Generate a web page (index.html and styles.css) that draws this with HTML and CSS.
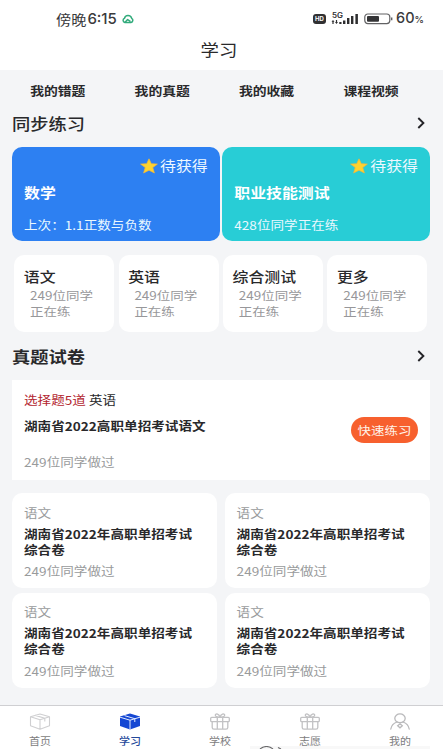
FILE: index.html
```html
<!DOCTYPE html>
<html lang="zh-CN">
<head>
<meta charset="utf-8">
<title>学习</title>
<link rel="stylesheet" href="styles.css">
</head>
<body>
<svg class="defs" width="0" height="0">
  <symbol id="star" viewBox="0 0 18 16"><path d="M9 .8 11.3 5.7 17.4 6.1 12.8 9.6 14.4 15 9 12.2 3.6 15 5.2 9.6.6 6.1 6.7 5.7Z" fill="#fdd32f" stroke="#f3b63a" stroke-width=".7" stroke-linejoin="round"/></symbol>
  <symbol id="chevron" viewBox="0 0 8 12"><path d="M1.3 1 6.4 6 1.3 11" fill="none" stroke="#242428" stroke-width="1.9"/></symbol>
  <symbol id="gift" viewBox="0 0 20 17"><g fill="none" stroke="#c2c2c4" stroke-width="1.3" stroke-linejoin="round"><rect x=".7" y="4.300" width="18.600" height="4.400" rx="1"/><path d="M2.200 8.700V14.600Q2.200 16.200 4 16.200H16Q17.800 16.200 17.800 14.600V8.700M7.300 4.300V16M12.700 4.300V16M10 4.200C7 4.200 5 3.400 5.300 2 5.800.2 9.200.600 10 4.200 10.800.600 14.200.200 14.700 2 15 3.400 13 4.200 10 4.200"/></g></symbol>
</svg>
<div class="app">
  <header class="status">
    <div class="clock"><span class="t">傍晚</span><span class="time">6:15</span>
      <svg width="12" height="10" viewBox="0 0 12 10"><path d="M2.800 8.500H9A2.200 2.200 0 0 0 9.700 4.400C9.300 2.400 7.900 1.400 6 1.400S2.800 2.500 2.500 4.300A2.200 2.200 0 0 0 2.800 8.500L5.600 5.600 8 7.200" fill="none" stroke="#32ab7c" stroke-width="1.500" stroke-linecap="round" stroke-linejoin="round"/></svg>
    </div>
    <div class="signals">
      <span class="hd">HD</span>
      <svg class="bars" width="28" height="13" viewBox="0 0 28 13"><text x="1" y="5.600" class="net" textLength="11" lengthAdjust="spacingAndGlyphs">5G</text><path fill="#2d2d2f" d="M2 8 3.500 9.700H2.600V12H1.400V9.700H.5ZM5.500 12 4 10H4.900V8H6.100V10H7ZM8.300 10h2.200v2h-2.200ZM12 8.500h2.400V12h-2.400ZM16 6h2.400v6h-2.400ZM20 4h2.400v8h-2.400ZM24.400 2h2.500v10h-2.500Z"/></svg>
      <svg class="battery" width="29" height="12" viewBox="0 0 29 12"><rect x=".8" y="1" width="25" height="9.600" rx="3" fill="none" stroke="#626264" stroke-width="1.200"/><rect x="3" y="3" width="12" height="5.700" rx="1" fill="#343436"/><path d="M27.700 4.500v2.800" stroke="#626264" stroke-width="1.400"/></svg>
      <span class="percent">60<small>%</small></span>
    </div>
  </header>
  <h1 class="title"><span class="t">学习</span></h1>

  <main>
    <nav class="links"><span class="t">我的错题</span><span class="t">我的真题</span><span class="t">我的收藏</span><span class="t">课程视频</span></nav>

    <div class="section"><h2 class="t">同步练习</h2><svg width="8" height="12"><use href="#chevron"/></svg></div>
    <div class="heroes">
      <article class="hero blue">
        <div class="badge"><svg width="18" height="16"><use href="#star"/></svg><span class="t">待获得</span></div>
        <h3 class="t">数学</h3>
        <p class="t">上次：1.1正数与负数</p>
      </article>
      <article class="hero teal">
        <div class="badge"><svg width="18" height="16"><use href="#star"/></svg><span class="t">待获得</span></div>
        <h3 class="t">职业技能测试</h3>
        <p class="t">428位同学正在练</p>
      </article>
    </div>
    <div class="subjects">
      <article class="subject"><h3 class="t">语文</h3><p class="t">249位同学</p><p class="t">正在练</p></article>
      <article class="subject"><h3 class="t">英语</h3><p class="t">249位同学</p><p class="t">正在练</p></article>
      <article class="subject"><h3 class="t">综合测试</h3><p class="t">249位同学</p><p class="t">正在练</p></article>
      <article class="subject"><h3 class="t">更多</h3><p class="t">249位同学</p><p class="t">正在练</p></article>
    </div>

    <div class="section papers-head"><h2 class="t">真题试卷</h2><svg width="8" height="12"><use href="#chevron"/></svg></div>
    <article class="feature">
      <div>
        <p class="t tag"><em>选择题5道</em> 英语</p>
        <h3 class="t">湖南省2022高职单招考试语文</h3>
        <p class="t count">249位同学做过</p>
      </div>
      <button><span class="t">快速练习</span></button>
    </article>
    <div class="papers">
      <article class="paper"><p class="t">语文</p><h3 class="t">湖南省2022年高职单招考试</h3><h3 class="t">综合卷</h3><p class="t count">249位同学做过</p></article>
      <article class="paper"><p class="t">语文</p><h3 class="t">湖南省2022年高职单招考试</h3><h3 class="t">综合卷</h3><p class="t count">249位同学做过</p></article>
      <article class="paper"><p class="t">语文</p><h3 class="t">湖南省2022年高职单招考试</h3><h3 class="t">综合卷</h3><p class="t count">249位同学做过</p></article>
      <article class="paper"><p class="t">语文</p><h3 class="t">湖南省2022年高职单招考试</h3><h3 class="t">综合卷</h3><p class="t count">249位同学做过</p></article>
    </div>
  </main>

  <nav class="tabbar">
    <a><svg width="22" height="17" viewBox="0 0 22 17"><path d="M11 1 20.500 3.800V12.800L11 16.200 1.500 12.800V3.800ZM1.500 3.800 11 6.800 20.500 3.800M11 6.800V16M6.300 2.400 15.800 5.300V8.500" fill="none" stroke="#cfcfd1" stroke-width="1.100" stroke-linejoin="round"/></svg><span class="t">首页</span></a>
    <a class="active"><svg width="22" height="17" viewBox="0 0 22 17"><path d="M11 .6 21 3.600V13L11 16.600 1 13V3.600Z" fill="#1547d3"/><path d="M1 4.200 11 7.200 21 4.200M11 7.200V16.500M5.500 2.600 15.800 5.700V9" fill="none" stroke="#e4ecff" stroke-width="1"/></svg><span class="t">学习</span></a>
    <a><svg width="20" height="17"><use href="#gift"/></svg><span class="t">学校</span></a>
    <a><svg width="20" height="17"><use href="#gift"/></svg><span class="t">志愿</span></a>
    <a><svg width="20" height="17" viewBox="0 0 20 17"><g fill="none" stroke="#b9b9bb" stroke-width="1.300" stroke-linecap="round"><ellipse cx="10" cy="5.300" rx="5.200" ry="4.400"/><path d="M7 9C3.500 10.200 1.400 12.600.8 16M13 9C16.500 10.200 18.600 12.600 19.200 16M10 10.800 12.300 12.800 10 14.800 7.700 12.800Z"/></g></svg><span class="t">我的</span></a>
    <svg class="peek" width="200" height="3" viewBox="0 0 200 3"><path d="M0 0H180V3H0Z" fill="#f8f8f8"/><path d="M10 3Q16.500-2 23 3M28 1.500l3 1.500" fill="none" stroke="#69696b" stroke-width="1.100"/></svg>
  </nav>
</div>
</body>
</html>
```

FILE: styles.css
```css
* { box-sizing: border-box; margin: 0; padding: 0; }
body {
  width: 443px; height: 749px; overflow: hidden; background: #fff;
  font-family: "Noto Sans CJK SC", "Noto Sans", sans-serif;
  font-size: 13.6px; color: #29292b;
}
.defs { position: absolute; }
svg { display: block; flex: none; }
.app { height: 749px; display: flex; flex-direction: column; }

/* Wide letterforms */
.t { display: block; white-space: nowrap; line-height: 16px; transform: scaleY(.88); transform-origin: left 40%; }

.status { height: 36px; padding: 1px 18px 0 56px; display: flex; justify-content: space-between; align-items: center; }
.clock { display: flex; align-items: center; font-size: 15.2px; color: #3a3a3c; }
.time { font: 500 15px/16px Inter, sans-serif; margin: 0 5px 0 1px; }
.signals { display: flex; align-items: center; }
.hd { width: 13px; height: 10px; border-radius: 3px; background: #303032; color: #fff; font: 700 6px/10px Inter, sans-serif; text-align: center; }
.bars { margin-left: 5px; }
.net { font: 600 7px Inter, sans-serif; fill: #2d2d2f; }
.battery { margin-left: 5px; }
.percent { width: 29px; margin-left: 3px; font: 500 14.5px/16px Inter, sans-serif; color: #3a3a3c; white-space: nowrap; }
.percent small { font-size: 9.5px; }

.title { height: 34px; padding: 5px 5px 0 0; display: flex; justify-content: center; font-size: 18.4px; font-weight: 400; }

main { flex: 1; background: #f4f5f7; padding: 0 13px 0 12px; }
.links { display: grid; grid-template-columns: repeat(4, 104.4px); margin-left: -6.4px; height: 41px; padding-top: 12px; font-size: 13.8px; font-weight: 700; }
.links .t { text-align: center; }

.section { height: 24px; display: flex; align-items: center; justify-content: space-between; padding-right: 5px; }
.section h2 { font-size: 18.3px; font-weight: 500; }
.heroes { display: grid; grid-template-columns: 1fr 1fr; gap: 2.5px; margin-top: 12px; }
.hero { height: 94px; border-radius: 10px; padding: 11px 12px 0 12px; color: #fff; }
.blue { background: #2d80f2; }
.teal { background: #28cdd6; }
.badge { height: 16px; display: flex; align-items: center; justify-content: flex-end; gap: 2px; font-size: 15.9px; color: #eef8ff; }
.hero h3 { margin-top: 11px; font-size: 15.9px; font-weight: 700; }
.hero p { margin-top: 16px; color: #eaf8ff; }

.subjects { display: grid; grid-template-columns: repeat(4, 100px); gap: 4.4px; margin: 14px 0 0 2.3px; }
.subject { height: 77px; border-radius: 10px; background: #fff; padding: 14px 0 0 9.5px; }
.subject h3 { font-size: 15.9px; font-weight: 500; }
.subject p { margin-left: 6.2px; color: #97979a; font-size: 13.5px; }
.subject h3 + p { margin-top: 2px; }

.papers-head { margin-top: 12px; }
.papers-head h2 { font-weight: 700; }
.feature { height: 99.5px; margin-top: 12px; background: #fff; padding: 12px 12px 0 12px; display: flex; justify-content: space-between; }
.feature em { font-style: normal; color: #b32630; }
.feature h3 { margin-top: 10px; font-size: 13.6px; }
.feature .count { margin-top: 20px; }
.count, .paper p { color: #999b9c; }
button { width: 67px; height: 26px; margin-top: 25px; border: 0; border-radius: 13px; background: #f7602e; color: #fff3e8; font: inherit; font-size: 13.5px; display: flex; align-items: center; justify-content: center; }

.papers { display: grid; grid-template-columns: 205px 205px; column-gap: 7.6px; row-gap: 4.5px; margin-top: 13.5px; }
.paper { height: 95px; border-radius: 10px; background: #fff; padding: 11.5px 0 0 12px; }
.paper h3 { font-size: 13.6px; font-weight: 700; }
.paper p + h3 { margin-top: 5px; }
.paper .count { margin-top: 5.5px; }

.tabbar { position: relative; height: 44px; flex: none; border-top: 1px solid #cfcfd2; display: grid; grid-template-columns: repeat(5, 90px); margin: 0 -2px 0 -5px; }
.tabbar a { display: flex; flex-direction: column; align-items: center; padding-top: 7px; font-size: 11px; color: #7d7d80; }
.tabbar a .t { margin-top: 3px; }
.tabbar .active { color: #24489a; font-weight: 500; }
.peek { position: absolute; left: 255px; bottom: 0; }
```
